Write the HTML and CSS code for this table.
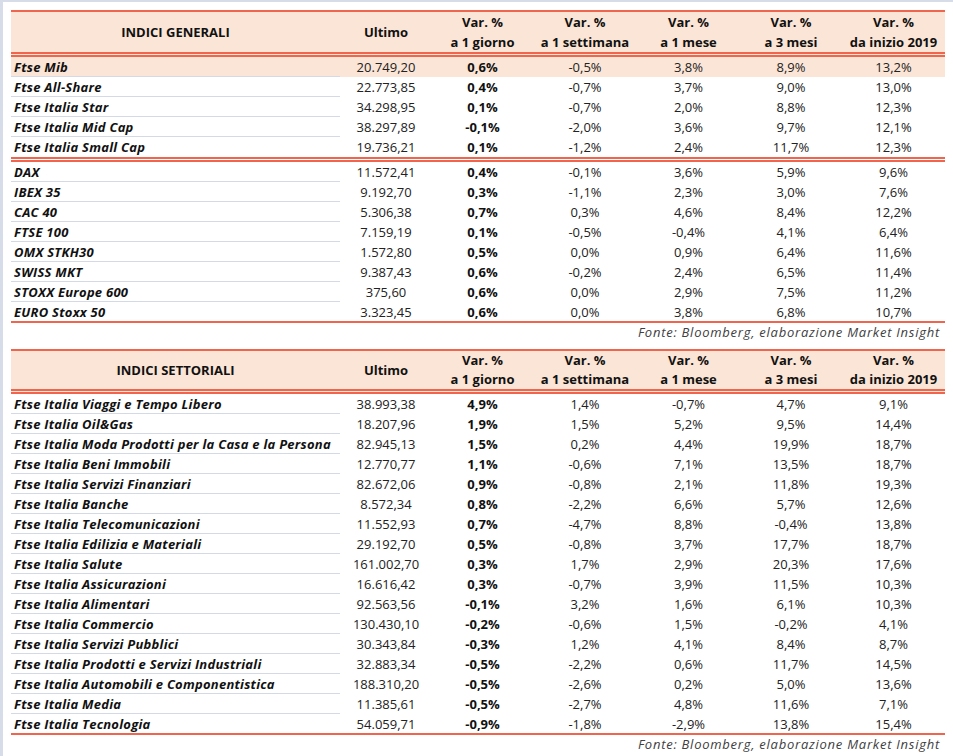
FILE: index.html
```html
<!DOCTYPE html>
<html lang="it">
<head>
<meta charset="utf-8">
<title>Indici</title>
<link rel="stylesheet" href="styles.css">
</head>
<body>
<div class="frame">
<table class="grid">
<colgroup><col class="c1"><col class="c2"><col class="c3"><col class="c4"><col class="c5"><col class="c6"><col class="c7"></colgroup>
<thead>
<tr class="head"><th>INDICI GENERALI</th><th>Ultimo</th><th>Var. %<br>a 1 giorno</th><th>Var. %<br>a 1 settimana</th><th>Var. %<br>a 1 mese</th><th>Var. %<br>a 3 mesi</th><th>Var. %<br>da inizio 2019</th></tr>
</thead>
<tbody>
<tr class="hl"><td>Ftse Mib</td><td>20.749,20</td><td>0,6%</td><td>-0,5%</td><td>3,8%</td><td>8,9%</td><td>13,2%</td></tr>
<tr><td>Ftse All-Share</td><td>22.773,85</td><td>0,4%</td><td>-0,7%</td><td>3,7%</td><td>9,0%</td><td>13,0%</td></tr>
<tr><td>Ftse Italia Star</td><td>34.298,95</td><td>0,1%</td><td>-0,7%</td><td>2,0%</td><td>8,8%</td><td>12,3%</td></tr>
<tr><td>Ftse Italia Mid Cap</td><td>38.297,89</td><td>-0,1%</td><td>-2,0%</td><td>3,6%</td><td>9,7%</td><td>12,1%</td></tr>
<tr class="split"><td>Ftse Italia Small Cap</td><td>19.736,21</td><td>0,1%</td><td>-1,2%</td><td>2,4%</td><td>11,7%</td><td>12,3%</td></tr>
<tr><td>DAX</td><td>11.572,41</td><td>0,4%</td><td>-0,1%</td><td>3,6%</td><td>5,9%</td><td>9,6%</td></tr>
<tr><td>IBEX 35</td><td>9.192,70</td><td>0,3%</td><td>-1,1%</td><td>2,3%</td><td>3,0%</td><td>7,6%</td></tr>
<tr><td>CAC 40</td><td>5.306,38</td><td>0,7%</td><td>0,3%</td><td>4,6%</td><td>8,4%</td><td>12,2%</td></tr>
<tr><td>FTSE 100</td><td>7.159,19</td><td>0,1%</td><td>-0,5%</td><td>-0,4%</td><td>4,1%</td><td>6,4%</td></tr>
<tr><td>OMX STKH30</td><td>1.572,80</td><td>0,5%</td><td>0,0%</td><td>0,9%</td><td>6,4%</td><td>11,6%</td></tr>
<tr><td>SWISS MKT</td><td>9.387,43</td><td>0,6%</td><td>-0,2%</td><td>2,4%</td><td>6,5%</td><td>11,4%</td></tr>
<tr><td>STOXX Europe 600</td><td>375,60</td><td>0,6%</td><td>0,0%</td><td>2,9%</td><td>7,5%</td><td>11,2%</td></tr>
<tr class="last"><td>EURO Stoxx 50</td><td>3.323,45</td><td>0,6%</td><td>0,0%</td><td>3,8%</td><td>6,8%</td><td>10,7%</td></tr>
</tbody>
</table>
<div class="source">Fonte: Bloomberg, elaborazione Market Insight</div>

<table class="grid second">
<colgroup><col class="c1"><col class="c2"><col class="c3"><col class="c4"><col class="c5"><col class="c6"><col class="c7"></colgroup>
<thead>
<tr class="head"><th>INDICI SETTORIALI</th><th>Ultimo</th><th>Var. %<br>a 1 giorno</th><th>Var. %<br>a 1 settimana</th><th>Var. %<br>a 1 mese</th><th>Var. %<br>a 3 mesi</th><th>Var. %<br>da inizio 2019</th></tr>
</thead>
<tbody>
<tr><td>Ftse Italia Viaggi e Tempo Libero</td><td>38.993,38</td><td>4,9%</td><td>1,4%</td><td>-0,7%</td><td>4,7%</td><td>9,1%</td></tr>
<tr><td>Ftse Italia Oil&amp;Gas</td><td>18.207,96</td><td>1,9%</td><td>1,5%</td><td>5,2%</td><td>9,5%</td><td>14,4%</td></tr>
<tr><td>Ftse Italia Moda Prodotti per la Casa e la Persona</td><td>82.945,13</td><td>1,5%</td><td>0,2%</td><td>4,4%</td><td>19,9%</td><td>18,7%</td></tr>
<tr><td>Ftse Italia Beni Immobili</td><td>12.770,77</td><td>1,1%</td><td>-0,6%</td><td>7,1%</td><td>13,5%</td><td>18,7%</td></tr>
<tr><td>Ftse Italia Servizi Finanziari</td><td>82.672,06</td><td>0,9%</td><td>-0,8%</td><td>2,1%</td><td>11,8%</td><td>19,3%</td></tr>
<tr><td>Ftse Italia Banche</td><td>8.572,34</td><td>0,8%</td><td>-2,2%</td><td>6,6%</td><td>5,7%</td><td>12,6%</td></tr>
<tr><td>Ftse Italia Telecomunicazioni</td><td>11.552,93</td><td>0,7%</td><td>-4,7%</td><td>8,8%</td><td>-0,4%</td><td>13,8%</td></tr>
<tr><td>Ftse Italia Edilizia e Materiali</td><td>29.192,70</td><td>0,5%</td><td>-0,8%</td><td>3,7%</td><td>17,7%</td><td>18,7%</td></tr>
<tr><td>Ftse Italia Salute</td><td>161.002,70</td><td>0,3%</td><td>1,7%</td><td>2,9%</td><td>20,3%</td><td>17,6%</td></tr>
<tr><td>Ftse Italia Assicurazioni</td><td>16.616,42</td><td>0,3%</td><td>-0,7%</td><td>3,9%</td><td>11,5%</td><td>10,3%</td></tr>
<tr><td>Ftse Italia Alimentari</td><td>92.563,56</td><td>-0,1%</td><td>3,2%</td><td>1,6%</td><td>6,1%</td><td>10,3%</td></tr>
<tr><td>Ftse Italia Commercio</td><td>130.430,10</td><td>-0,2%</td><td>-0,6%</td><td>1,5%</td><td>-0,2%</td><td>4,1%</td></tr>
<tr><td>Ftse Italia Servizi Pubblici</td><td>30.343,84</td><td>-0,3%</td><td>1,2%</td><td>4,1%</td><td>8,4%</td><td>8,7%</td></tr>
<tr><td>Ftse Italia Prodotti e Servizi Industriali</td><td>32.883,34</td><td>-0,5%</td><td>-2,2%</td><td>0,6%</td><td>11,7%</td><td>14,5%</td></tr>
<tr><td>Ftse Italia Automobili e Componentistica</td><td>188.310,20</td><td>-0,5%</td><td>-2,6%</td><td>0,2%</td><td>5,0%</td><td>13,6%</td></tr>
<tr><td>Ftse Italia Media</td><td>11.385,61</td><td>-0,5%</td><td>-2,7%</td><td>4,8%</td><td>11,6%</td><td>7,1%</td></tr>
<tr class="last"><td>Ftse Italia Tecnologia</td><td>54.059,71</td><td>-0,9%</td><td>-1,8%</td><td>-2,9%</td><td>13,8%</td><td>15,4%</td></tr>
</tbody>
</table>
<div class="source source-end">Fonte: Bloomberg, elaborazione Market Insight</div>
</div>
</body>
</html>
```

FILE: styles.css
```css
html, body {
  margin: 0;
  padding: 0;
  background: #ffffff;
}

body {
  font-family: "Open Sans", "DejaVu Sans", sans-serif;
  font-size: 13px;
  color: #222222;
}

.frame {
  box-sizing: border-box;
  height: 756px;
  border-left: 3px solid #d6dce8;
  border-top: 2px solid #d6dce8;
  padding: 8px 0 0 8px;
}

.grid {
  width: 934px;
  table-layout: fixed;
  border-collapse: separate;
  border-spacing: 0;
}

.c1 { width: 329px; }
.c2 { width: 92px; }
.c3 { width: 101px; }
.c4 { width: 104px; }
.c5 { width: 103px; }
.c6 { width: 102px; }
.c7 { width: 103px; }

.head {
  height: 47px;
}

.second .head {
  height: 45px;
}

.head th {
  background: #fbe5d6;
  border-top: 2px solid #f0654e;
  border-bottom: 5px double #f0654e;
  padding: 0;
  font-weight: 700;
  line-height: 20px;
  color: #111111;
  text-align: center;
  vertical-align: middle;
}

.second .head th {
  line-height: 19px;
}

.grid tbody tr {
  height: 20px;
}

.grid td {
  padding: 0;
  line-height: 18px;
  text-align: center;
  vertical-align: middle;
  white-space: nowrap;
}

.grid td:first-child {
  text-align: left;
  padding-left: 3px;
  font-weight: 700;
  font-style: italic;
  letter-spacing: 0.25px;
  color: #111111;
  border-bottom: 1px solid #d3d9e6;
}

.grid td:nth-child(3) {
  font-weight: 700;
  color: #111111;
}

.grid tr.hl td {
  background: #fbe5d6;
}

.grid tr.split {
  height: 25px;
}

.grid tr.split td,
.grid tr.split td:first-child {
  border-bottom: 5px double #f0654e;
}

.grid tr.last {
  height: 21px;
}

.grid tr.last td,
.grid tr.last td:first-child {
  border-bottom: 2px solid #f0654e;
}

.source {
  height: 26px;
  width: 934px;
  box-sizing: border-box;
  padding-right: 5px;
  text-align: right;
  font-style: italic;
  line-height: 18px;
  letter-spacing: 0.75px;
  color: #404040;
}

.source-end {
  height: 21px;
}
```
